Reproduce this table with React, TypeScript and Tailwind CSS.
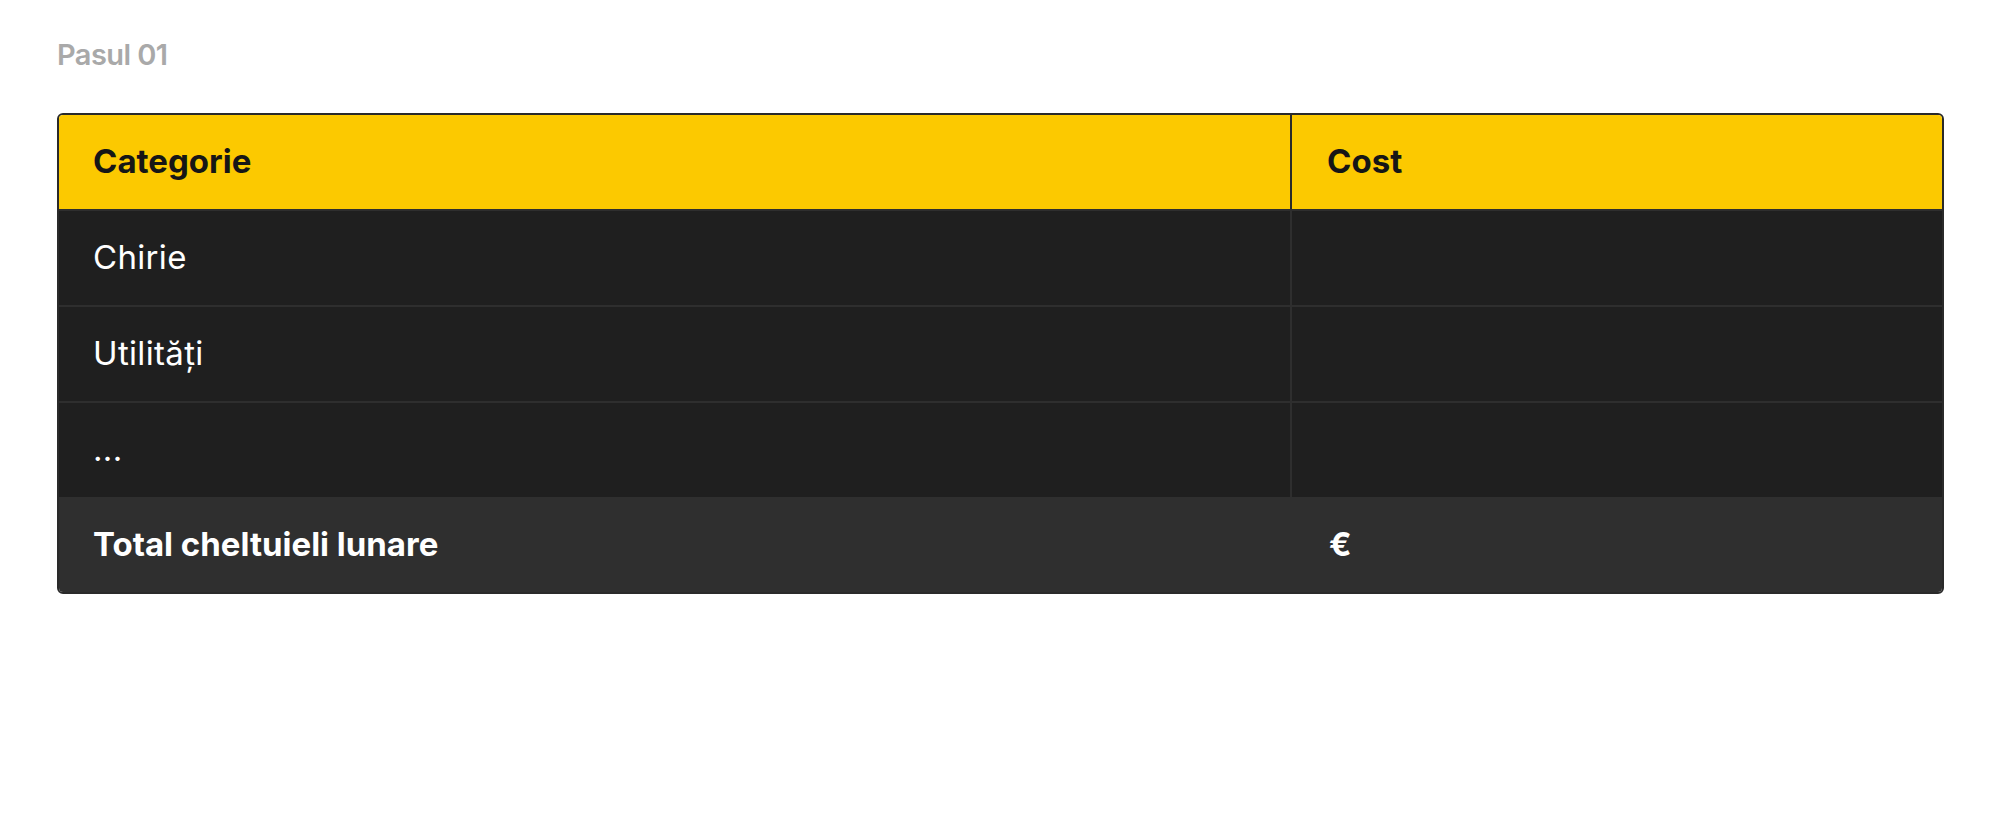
const rows = ["Chirie", "Utilități", "..."];

const App = () => {
  return (
    <div className="min-h-screen bg-white px-[57px] pt-10 font-['Inter',sans-serif]">
      <h2 className="text-[29px] font-semibold leading-none text-[#a9a9a9] tracking-[-0.02em]">Pasul 01</h2>

      <div className="mt-[44px] w-[1887px] overflow-hidden rounded-md border-2 border-[#2a2a2a]">
        {/* header */}
        <div className="grid h-[94px] grid-cols-[1233px_1fr] bg-[#fcc900] text-[#161616]">
          <div className="flex items-center border-r-2 border-[#2a2a2a] pl-[34px] text-[33px] font-bold">
            Categorie
          </div>
          <div className="flex items-center pl-[35px] text-[33px] font-bold">Cost</div>
        </div>

        {rows.map((r) => (
          <div key={r} className="grid h-[96px] grid-cols-[1233px_1fr] border-t-2 border-[#2e2e2e] bg-[#1f1f1f] text-white">
            <div className="flex items-center border-r-2 border-[#2e2e2e] pl-[34px] text-[33px] font-normal tracking-[0.01em]">
              {r}
            </div>
            <div />
          </div>
        ))}

        {/* total */}
        <div className="grid h-[95px] grid-cols-[1235px_1fr] bg-[#2f2f2f] text-white">
          <div className="flex items-center pl-[34px] text-[33px] font-bold">Total cheltuieli lunare</div>
          <div className="flex items-center pl-[35px] text-[33px] font-bold">€</div>
        </div>
      </div>
    </div>
  );
};

export default App;
